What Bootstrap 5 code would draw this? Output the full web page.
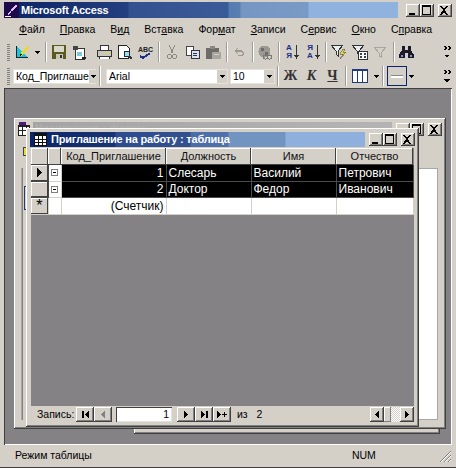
<!DOCTYPE html>
<html lang="ru">
<head>
    <meta charset="UTF-8">
    <title>Microsoft Access</title>
    <link href="https://cdn.jsdelivr.net/npm/bootstrap@5.3.0/dist/css/bootstrap.min.css" rel="stylesheet">
    <style>
        html, body { margin: 0; height: 468px; overflow: hidden; background: #d4d0c8; }
        body { font: 11px/1 "Liberation Sans", sans-serif; color: #000; }
        svg { display: block; shape-rendering: crispEdges; }

        /* main window */
        .app-shell { width: 456px; height: 468px; padding: 2px 4px 2px; border-bottom: 1px solid #404040; }
        .app-title { height: 16px; }
        .grad-main {
            background: linear-gradient(90deg, #0a246a 0, #17306f 60px, #233f80 124px, #33518f 125px, #3b5a98 224px, #567bb0 225px, #5a7eb2 236px, #7596c3 237px, #7a9ac6 304px, #8fb2df 305px, #8fb2df 100%);
        }
        .grad-sub {
            background: linear-gradient(90deg, #0a246a 0, #1a3574 85px, #2d4c90 86px, #33518f 160px, #4a6ca8 161px, #5071ab 198px, #7294c0 199px, #7294c0 255px, #8fb0dc 256px, #8fb0dc 100%);
        }
        .title-txt { color: #fff; font-weight: 700; font-size: 11px; letter-spacing: -.2px; white-space: nowrap; }
        .title-main { margin-left: 2px; }
        .cap-btn {
            width: 14px; height: 13px; background: #d4d0c8; padding: 1px; flex: none;
            box-shadow: inset -1px -1px #404040, inset 1px 1px #fff, inset -2px -2px #808080;
        }
        .menu-row { height: 22px; padding-left: 15px; column-gap: 15px; font-size: 10.5px; white-space: nowrap; }
        .tool-row { height: 24px; }
        .fmt-row { height: 24px; }
        .grip { width: 3px; height: 17px; margin-left: 3px; flex: none; background: repeating-linear-gradient(180deg, #808080 0 1px, #d4d0c8 1px 2px); }
        .tb { width: 21px; height: 22px; flex: none; }
        .tb-view { width: 22px; margin-left: 1px; }
        .tb-arr { width: 8px; flex: none; }
        .tb-wide { width: 24px; }
        .tb-line { width: 20px; height: 20px; margin-left: 2px; border: 1px solid #0a246a; flex: none; }
        .sep { width: 2px; height: 20px; margin: 0 1px 0 2px; flex: none; background: #9c9a94; border-right: 1px solid #fff; }
        .chev { width: 8px; margin-right: 1px; flex: none; }
        .pl-gap { margin-left: 3px; }
        .combo { height: 15px; background: #fff; padding-left: 3px; flex: none; box-shadow: inset 0 0 0 1px #e4e2dc; font-size: 10.5px; }
        .combo-code { width: 83px; margin-left: 3px; white-space: nowrap; overflow: hidden; }
        .combo-font { width: 122px; }
        .combo-size { width: 45px; margin-left: 2px; }
        .combo-arrow { width: 10px; height: 13px; margin: 0 1px 0 auto; background: #d4d0c8; flex: none; }
        .letter-btn { font: 700 14px/1 "Liberation Serif", serif; color: #333; }
        .sort-txt { font: 700 8px/8px "Liberation Sans", sans-serif; color: #1c2f8a; text-align: center; width: 9px; }
        .spell-txt { font: 700 7px/7px "Liberation Sans", sans-serif; color: #222; }

        /* mdi area: the child windows sit on it like on a desktop */
        .mdi { height: 357px; background: #848284; box-shadow: inset 1px 1px #404040, inset -1px -1px #fff; }
        .child { position: absolute; background: #d4d0c8; box-shadow: inset -1px -1px #404040, inset 1px 1px #fff, inset -2px -2px #808080; padding: 4px; }
        .child-third { left: 130px; top: 200px; width: 306px; height: 146px; }
        .child-back { left: 10px; top: 30px; width: 432px; height: 311px; }
        .child-front { left: 22px; top: 40px; width: 393px; height: 299px; padding-bottom: 5px; }
        .back-title { height: 15px; }
        .grad-idle { background: linear-gradient(90deg, #a4a4a4 0, #b4b4b4 100%); color: #b0b0b0; font-weight: 700; padding: 1px 2px; white-space: nowrap; }
        .back-panel { position: absolute; left: 7px; top: 50px; width: 417px; height: 252px; background: #fff; box-shadow: inset 0 0 0 1px #a8a8a8; }
        .back-strip { width: 5px; background: #d4d0c8; border-left: 1px solid #808080; margin-left: 1px; padding-top: 18px; }
        .back-field { height: 24px; border: 1px solid #223a7a; border-right: 0; margin-left: 1px; }
        .back-dot { position: absolute; left: 10px; top: 30px; width: 3px; height: 7px; background: #e8d838; box-shadow: 0 0 0 1px #444; }
        .sheet-wrap { margin: 1px 1px 0; background: #848284; overflow: hidden; }
        .dsheet { border-collapse: collapse; table-layout: fixed; width: 382px; font-size: 12px; }
        .dsheet th, .dsheet td { padding: 0 2px; white-space: nowrap; overflow: hidden; height: 16px; }
        .dsheet th { height: 17px; background: #d4d0c8; font-weight: 400; font-size: 11px; text-align: center; color: #111; box-shadow: inset -1px -1px #404040, inset 1px 1px #fff; }
        .dsheet .picked td { background: #000; color: #fff; border: 1px solid #4a4a4a; border-width: 0 1px 1px 0; }
        .dsheet .fresh td { background: #fff; border-right: 1px solid #d4d0c8; border-bottom: 1px solid #d4d0c8; height: 17px; }
        .dsheet td.sel { background: #d4d0c8 !important; padding: 0; box-shadow: inset -1px -1px #404040, inset 1px 1px #fff; }
        .dsheet td.exp { background: #fff !important; padding: 0; border: 0 !important; border-right: 1px solid #d4d0c8 !important; border-bottom: 1px solid #d4d0c8 !important; }
        .plus { width: 7px; height: 7px; margin: 0 auto; border: 1px solid #808080; position: relative; }
        .plus::after { content: ""; position: absolute; left: 1px; top: 2px; width: 3px; height: 1px; background: #000; }
        .nav-bar { height: 16px; margin: 0 1px; font-size: 10.5px; white-space: nowrap; }
        .nav-label { width: 39px; margin-left: 6px; flex: none; }
        .nav-btn { width: 18px; height: 15px; flex: none; box-shadow: inset -1px -1px #404040, inset 1px 1px #fff, inset -2px -2px #808080; }
        .nav-num { width: 56px; height: 15px; margin: 0 5px 0 4px; background: #fff; text-align: right; padding: 2px 3px 0 0; flex: none; box-shadow: inset 1px 1px #404040, inset -1px -1px #e4e2dc; }
        .nav-of { margin-left: 6px; flex: none; }
        .scroll-btn { width: 14px; height: 15px; flex: none; box-shadow: inset -1px -1px #404040, inset 1px 1px #fff, inset -2px -2px #808080; }
        .scroll-thumb { width: 7px; height: 15px; flex: none; box-shadow: inset -1px -1px #808080, inset 1px 1px #fff; }
        .scroll-track { width: 9px; height: 15px; flex: none; background: repeating-conic-gradient(#fff 0 25%, #d4d0c8 0 50%) 0 0 / 2px 2px; }
        .status-row { height: 19px; padding: 1px 0 0 11px; font-size: 10.5px; position: relative; }
        .status-num { margin-left: 260px; }
        .resize-grip { position: absolute; right: 0; bottom: 1px; }
    </style>
</head>

<body>
    <div class="app-shell d-flex flex-column">

        <!-- Title bar -->
        <div class="app-title d-flex">
            <div class="flex-grow-1 grad-main d-flex align-items-center">
                <svg width="15" height="16" viewBox="0 0 15 16">
                    <rect width="15" height="16" fill="#1d0a4a"/>
                    <path d="M3 12l3-3 1 1-3 3zM6 8l5-5h2v2l-5 4z" fill="#e8b8f0"/>
                    <path d="M1 14h6v1H1z" fill="#fff"/>
                </svg>
                <span class="title-txt title-main">Microsoft Access</span>
            </div>
            <div class="d-flex align-items-center ms-1">
                <div class="cap-btn ms-1"><svg width="12" height="11" viewBox="0 0 12 11"><path d="M2 8h6v2H2z"/></svg></div>
                <div class="cap-btn"><svg width="12" height="11" viewBox="0 0 12 11"><path d="M1 0h9v10H1zM2 2v7h7V2z" fill-rule="evenodd"/></svg></div>
                <div class="cap-btn ms-1"><svg width="12" height="11" viewBox="0 0 12 11"><path d="M1 1h2l2 3 2-3h2L6 5l3 5H7L5 7l-2 3H1l3-5z"/></svg></div>
            </div>
        </div>

        <!-- Menu -->
        <div class="menu-row d-flex align-items-center">
            <span><u>Ф</u>айл</span><span><u>П</u>равка</span><span>В<u>и</u>д</span><span>Вст<u>а</u>вка</span><span>Фор<u>м</u>ат</span><span><u>З</u>аписи</span><span>С<u>е</u>рвис</span><span><u>О</u>кно</span><span>С<u>п</u>равка</span>
        </div>

        <!-- Standard toolbar -->
        <div class="tool-row d-flex align-items-center">
            <div class="grip"></div>
            <div class="tb tb-view d-flex align-items-center justify-content-center">
                <svg width="16" height="16" viewBox="0 0 16 16"><path d="M2 2l11 11H2z" fill="#19c4d4"/><path d="M2 2v12h12v-1H3V2z" fill="#123"/><path d="M7 9l6-7 2 2-6 7-3 1z" fill="#e8d838"/><path d="M7 9l1 2-2 1z" fill="#111"/></svg>
            </div>
            <div class="tb-arr d-flex justify-content-center"><svg width="5" height="3" viewBox="0 0 5 3"><path d="M0 0h5L2.5 3z"/></svg></div>
            <div class="sep ms-1"></div>
            <div class="tb d-flex align-items-center justify-content-center">
                <svg width="14" height="14" viewBox="0 0 14 14"><path d="M0 0h14v14H0z" fill="#5c5a20"/><path d="M2 1h10v6H2z" fill="#d8d8c8"/><path d="M4 9h7v5H4z" fill="#c8c8b8"/><path d="M8 10h2v3H8z" fill="#333"/></svg>
            </div>
            <div class="tb d-flex align-items-center justify-content-center">
                <svg width="15" height="15" viewBox="0 0 15 15"><path d="M3 3h9v11H3z" fill="#fff" stroke="#333"/><path d="M1 1h5v4H1z" fill="#444"/><path d="M5 7h5v4H5z" fill="#7cc8e0"/><path d="M10 12h4v2h-4z" fill="#222"/></svg>
            </div>
            <div class="tb pl-gap d-flex align-items-center justify-content-center">
                <svg width="16" height="14" viewBox="0 0 16 14"><path d="M4 0h8v5H4z" fill="#fff" stroke="#333"/><path d="M1 5h14v6H1z" fill="#c8c8c0" stroke="#333"/><path d="M3 11h10v3H3z" fill="#fff" stroke="#333"/><path d="M9 7h4v1H9z" fill="#e8d838"/></svg>
            </div>
            <div class="tb d-flex align-items-center justify-content-center">
                <svg width="16" height="15" viewBox="0 0 16 15"><path d="M1 0h8l3 3v5h-1v5H1z" fill="#fff" stroke="#222"/><circle cx="10" cy="9" r="3" fill="#9be0e8" stroke="#224"/><path d="M12 11l3 3" stroke="#333" stroke-width="2"/></svg>
            </div>
            <div class="tb d-flex flex-column align-items-center justify-content-center">
                <span class="spell-txt">ABC</span>
                <svg width="13" height="6" viewBox="0 0 13 6"><path d="M1 3l3 2 7-5" fill="none" stroke="#1c2f8a" stroke-width="2"/></svg>
            </div>
            <div class="sep"></div>
            <div class="tb d-flex align-items-center justify-content-center">
                <svg width="10" height="15" viewBox="0 0 10 15"><path d="M2 0l4 8M8 0L4 8" stroke="#8a8880" fill="none"/><circle cx="2.5" cy="11.5" r="2" fill="none" stroke="#8a8880"/><circle cx="7.5" cy="11.5" r="2" fill="none" stroke="#8a8880"/></svg>
            </div>
            <div class="tb d-flex align-items-center justify-content-center">
                <svg width="14" height="13" viewBox="0 0 14 13"><path d="M0 0h7v9H0z" fill="#fff" stroke="#444"/><path d="M5 4h8v8H5z" fill="#d8e4f0" stroke="#334"/><path d="M7 7h4v1H7zM7 9h4v1H7z" fill="#334"/></svg>
            </div>
            <div class="tb d-flex align-items-center justify-content-center">
                <svg width="15" height="13" viewBox="0 0 15 13"><path d="M0 2h13v11H0z" fill="#6e6c68"/><path d="M4 0h5v3H4z" fill="#8a8880"/><path d="M6 6h9v7H6z" fill="#a8a6a0"/><path d="M8 8h5v1H8z" fill="#d4d0c8"/></svg>
            </div>
            <div class="sep"></div>
            <div class="tb d-flex align-items-center justify-content-center">
                <svg width="12" height="8" viewBox="0 0 12 8"><path d="M1 3h7a3 3 0 0 1 0 5H4M1 3l3-3M1 3l3 3" fill="none" stroke="#9a9890" stroke-width="1.4"/></svg>
            </div>
            <div class="sep"></div>
            <div class="tb d-flex align-items-center justify-content-center">
                <svg width="15" height="15" viewBox="0 0 15 15"><circle cx="6.5" cy="6.5" r="6" fill="#9a9890"/><path d="M3 3h3v3H3zM7 7h3v3H7z" fill="#6e6c68"/><rect x="5" y="10" width="5" height="4" rx="2" fill="none" stroke="#777"/><rect x="9" y="10" width="5" height="4" rx="2" fill="none" stroke="#777"/></svg>
            </div>
            <div class="sep"></div>
            <div class="tb d-flex align-items-center justify-content-center">
                <div class="sort-txt">А<br>Я</div>
                <svg width="5" height="14" viewBox="0 0 5 14"><path d="M2 0h1v10h2l-2.5 4L0 10h2z" fill="#333"/></svg>
            </div>
            <div class="tb d-flex align-items-center justify-content-center">
                <div class="sort-txt">Я<br>А</div>
                <svg width="5" height="14" viewBox="0 0 5 14"><path d="M2 0h1v10h2l-2.5 4L0 10h2z" fill="#333"/></svg>
            </div>
            <div class="sep"></div>
            <div class="tb d-flex align-items-center justify-content-center">
                <svg width="16" height="15" viewBox="0 0 16 15"><path d="M0 0h12L7 6v5L5 9V6z" fill="#e8f0f4" stroke="#333"/><path d="M12 4l-3 5h3l-3 5 6-7h-3l2-3z" fill="#e8d838" stroke="#444" stroke-width=".5"/></svg>
            </div>
            <div class="tb d-flex align-items-center justify-content-center">
                <svg width="16" height="15" viewBox="0 0 16 15"><path d="M0 0h12L7 6v3L5 8V6z" fill="#e8f0f4" stroke="#333"/><path d="M6 6h9v8H6z" fill="#fff" stroke="#333"/><path d="M8 8h2v2H8zM12 8h2v2h-2zM8 11h2v2H8zM12 11h2v2h-2z" fill="#345"/></svg>
            </div>
            <div class="tb d-flex align-items-center justify-content-center">
                <svg width="13" height="11" viewBox="0 0 13 11"><path d="M0 0h12L7 6v4L5 9V6z" fill="none" stroke="#a8a6a0"/></svg>
            </div>
            <div class="sep"></div>
            <div class="tb d-flex align-items-center justify-content-center">
                <svg width="15" height="12" viewBox="0 0 15 12"><path d="M3 0h3v4h3V0h3v4l3 5v3H9V7H6v5H0V9l3-5z" fill="#1a1a2a"/><path d="M2 9h2v2H2zM11 9h2v2h-2z" fill="#7c98c8"/></svg>
            </div>
            <div class="chev ms-auto">
                <svg width="8" height="12" viewBox="0 0 8 12"><path d="M0 0h2l2 2-2 2H0l2-2zM4 0h2l2 2-2 2H4l2-2zM2 9h4l-2 3z"/></svg>
            </div>
        </div>

        <!-- Formatting toolbar -->
        <div class="fmt-row d-flex align-items-center">
            <div class="grip"></div>
            <div class="combo combo-code d-flex align-items-center">
                <span>Код_Приглаше</span>
                <div class="combo-arrow d-flex align-items-center justify-content-center"><svg width="5" height="3" viewBox="0 0 5 3"><path d="M0 0h5L2.5 3z"/></svg></div>
            </div>
            <div class="sep pl-gap"></div>
            <div class="combo combo-font ms-1 d-flex align-items-center">
                <span>Arial</span>
                <div class="combo-arrow d-flex align-items-center justify-content-center"><svg width="5" height="3" viewBox="0 0 5 3"><path d="M0 0h5L2.5 3z"/></svg></div>
            </div>
            <div class="combo combo-size d-flex align-items-center">
                <span>10</span>
                <div class="combo-arrow d-flex align-items-center justify-content-center"><svg width="5" height="3" viewBox="0 0 5 3"><path d="M0 0h5L2.5 3z"/></svg></div>
            </div>
            <div class="sep"></div>
            <div class="tb letter-btn d-flex align-items-center justify-content-center">Ж</div>
            <div class="tb letter-btn fst-italic d-flex align-items-center justify-content-center">К</div>
            <div class="tb letter-btn d-flex align-items-center justify-content-center"><u>Ч</u></div>
            <div class="sep"></div>
            <div class="tb tb-wide d-flex align-items-center justify-content-center">
                <svg width="16" height="14" viewBox="0 0 16 14"><path d="M0 0h16v14H0z" fill="#fff"/><path d="M0 0h16v14H0zM1 2v11h4V2zM6 2v11h4V2zM11 2v11h4V2z" fill="#223a7a" fill-rule="evenodd"/></svg>
            </div>
            <div class="tb-arr d-flex justify-content-center"><svg width="5" height="3" viewBox="0 0 5 3"><path d="M0 0h5L2.5 3z"/></svg></div>
            <div class="sep"></div>
            <div class="tb-line d-flex align-items-center justify-content-center">
                <svg width="12" height="3" viewBox="0 0 12 3"><path d="M0 0h12v1H0z" fill="#888"/><path d="M0 1h12v2H0z" fill="#fff"/></svg>
            </div>
            <div class="tb-arr d-flex justify-content-center"><svg width="5" height="3" viewBox="0 0 5 3"><path d="M0 0h5L2.5 3z"/></svg></div>
            <div class="chev ms-auto">
                <svg width="8" height="13" viewBox="0 0 8 13"><path d="M0 0h2l2 2-2 2H0l2-2zM4 0h2l2 2-2 2H4l2-2zM1 9h6l-3 4z"/></svg>
            </div>
        </div>

        <!-- MDI client area -->
        <div class="mdi position-relative">
            <div class="child child-third"></div>

            <div class="child child-back">
                <div class="back-title d-flex">
                    <svg width="15" height="15" viewBox="0 0 15 15" class="flex-shrink-0"><path d="M1 0h7v3H1z" fill="#4a1a80"/><path d="M0 3h12v11H0z" fill="#fff"/><path d="M0 3h12v2H0zM0 3h1v11H0zM11 3h1v11h-1zM0 13h12v1H0zM4 5h1v8H4zM8 5h1v8H8zM0 8h12v1H0z" fill="#222"/></svg>
                    <div class="flex-grow-1 grad-idle">Назначения : форма</div>
                    <div class="d-flex align-items-center">
                        <div class="cap-btn ms-1"></div>
                        <div class="cap-btn"><svg width="12" height="11" viewBox="0 0 12 11"><path d="M1 0h9v10H1zM2 2v7h7V2z" fill-rule="evenodd"/></svg></div>
                        <div class="cap-btn ms-1"><svg width="12" height="11" viewBox="0 0 12 11"><path d="M1 1h2l2 3 2-3h2L6 5l3 5H7L5 7l-2 3H1l3-5z"/></svg></div>
                    </div>
                </div>
                <div class="back-dot"></div>
                <div class="back-panel d-flex"><div class="back-strip"><div class="back-field"></div></div></div>
            </div>

            <div class="child child-front d-flex flex-column">
                <div class="back-title d-flex">
                    <div class="flex-grow-1 grad-sub d-flex align-items-center">
                        <svg width="13" height="13" viewBox="0 0 13 13" class="mx-1"><path d="M0 0h13v13H0z" fill="#fff"/><path d="M0 0h13v3H0zM0 3h1v10H0zM12 3h1v10h-1zM0 12h13v1H0zM4 3h1v10H4zM8 3h1v10H8zM0 6h13v1H0zM0 9h13v1H0z" fill="#111"/></svg>
                        <span class="title-txt">Приглашение на работу : таблица</span>
                    </div>
                    <div class="d-flex align-items-center ms-1">
                        <div class="cap-btn"><svg width="12" height="11" viewBox="0 0 12 11"><path d="M2 8h6v2H2z"/></svg></div>
                        <div class="cap-btn"><svg width="12" height="11" viewBox="0 0 12 11"><path d="M1 0h9v10H1zM2 2v7h7V2z" fill-rule="evenodd"/></svg></div>
                        <div class="cap-btn ms-1"><svg width="12" height="11" viewBox="0 0 12 11"><path d="M1 1h2l2 3 2-3h2L6 5l3 5H7L5 7l-2 3H1l3-5z"/></svg></div>
                    </div>
                </div>

                <div class="sheet-wrap flex-grow-1">
                    <table class="dsheet">
                        <colgroup><col style="width:17px"><col style="width:13px"><col style="width:105px"><col style="width:85px"><col style="width:85px"><col style="width:77px"></colgroup>
                        <thead>
                            <tr><th></th><th></th><th>Код_Приглашение</th><th>Должность</th><th>Имя</th><th>Отчество</th></tr>
                        </thead>
                        <tbody>
                            <tr class="picked">
                                <td class="sel"><svg class="mx-auto" width="5" height="9" viewBox="0 0 5 9"><path d="M0 0l5 4.5L0 9z"/></svg></td>
                                <td class="exp"><div class="plus"></div></td>
                                <td class="text-end">1</td><td>Слесарь</td><td>Василий</td><td>Петрович</td>
                            </tr>
                            <tr class="picked">
                                <td class="sel"></td>
                                <td class="exp"><div class="plus"></div></td>
                                <td class="text-end">2</td><td>Доктор</td><td>Федор</td><td>Иванович</td>
                            </tr>
                            <tr class="fresh">
                                <td class="sel text-center fs-6 lh-1">*</td>
                                <td class="exp"></td>
                                <td class="text-end">(Счетчик)</td><td></td><td></td><td></td>
                            </tr>
                        </tbody>
                    </table>
                </div>

                <!-- Record navigator and horizontal scrollbar -->
                <div class="nav-bar d-flex align-items-center">
                    <span class="nav-label">Запись:</span>
                    <div class="nav-btn d-flex align-items-center justify-content-center"><svg width="7" height="7" viewBox="0 0 7 7"><path d="M0 0h2v7H0zM7 0v7L3 3.5z"/></svg></div>
                    <div class="nav-btn d-flex align-items-center justify-content-center"><svg width="4" height="7" viewBox="0 0 4 7"><path d="M4 0v7L0 3.5z" fill="#808080"/></svg></div>
                    <div class="nav-num">1</div>
                    <div class="nav-btn d-flex align-items-center justify-content-center"><svg width="4" height="7" viewBox="0 0 4 7"><path d="M0 0v7l4-3.5z"/></svg></div>
                    <div class="nav-btn d-flex align-items-center justify-content-center"><svg width="7" height="7" viewBox="0 0 7 7"><path d="M0 0v7l4-3.5zM5 0h2v7H5z"/></svg></div>
                    <div class="nav-btn d-flex align-items-center justify-content-center"><svg width="11" height="7" viewBox="0 0 11 7"><path d="M0 0v7l4-3.5zM7 1h1v2h2v1H8v2H7V4H5V3h2z"/></svg></div>
                    <span class="nav-of">из&nbsp;&nbsp;&nbsp;2</span>
                    <div class="scroll-btn ms-auto d-flex align-items-center justify-content-center"><svg width="4" height="7" viewBox="0 0 4 7"><path d="M4 0v7L0 3.5z"/></svg></div>
                    <div class="scroll-thumb"></div>
                    <div class="scroll-track"></div>
                    <div class="scroll-btn d-flex align-items-center justify-content-center"><svg width="4" height="7" viewBox="0 0 4 7"><path d="M0 0v7l4-3.5z"/></svg></div>
                </div>
            </div>
        </div>

        <!-- Status bar -->
        <div class="status-row d-flex align-items-center">
            <span>Режим таблицы</span>
            <span class="status-num">NUM</span>
            <svg class="resize-grip" width="13" height="13" viewBox="0 0 13 13"><path d="M12 1L1 12M12 5l-7 7M12 9l-3 3" stroke="#808080" fill="none"/><path d="M12 2L2 12M12 6l-6 6M12 10l-2 2" stroke="#fff" fill="none"/></svg>
        </div>
    </div>

    <script src="https://cdn.jsdelivr.net/npm/bootstrap@5.3.0/dist/js/bootstrap.bundle.min.js"></script>
</body>

</html>
